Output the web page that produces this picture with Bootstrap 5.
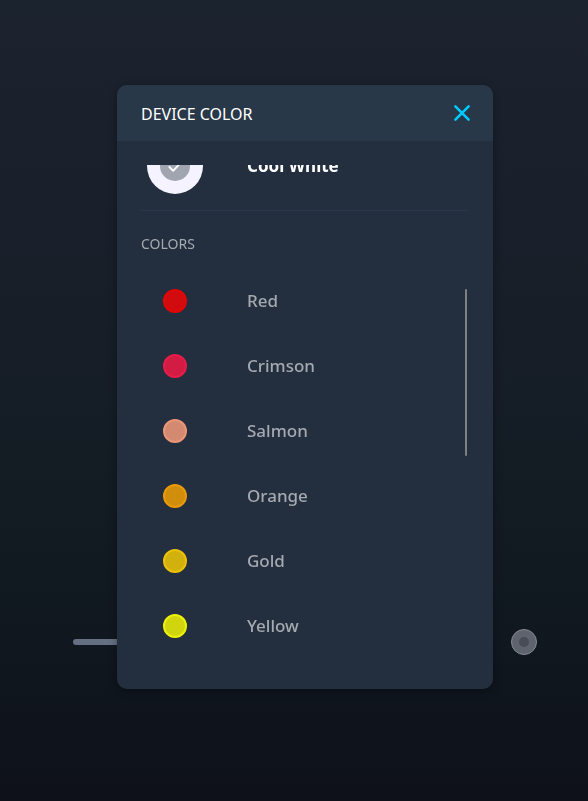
<!DOCTYPE html>
<html lang="en">
<head>
<meta charset="utf-8">
<meta name="viewport" content="width=device-width, initial-scale=1">
<title>Device color</title>
<link href="https://cdn.jsdelivr.net/npm/bootstrap@5.3.0/dist/css/bootstrap.min.css" rel="stylesheet">
<style>
  body { font-family: "Noto Sans", "Open Sans", sans-serif; color: #a5a9b0; background: linear-gradient(#1b232e, #19202b 25%, #151d26 50%, #111920 75%, #0e111a); }
  .control-bar { padding: 0 51px 146px 73px; }
  .level { appearance: none; background: #657083; height: 6px; border-radius: 3px; }
  .level::-webkit-slider-thumb { appearance: none; width: 24px; height: 24px; border-radius: 50%; background: #a5acb4; }
  .color-btn { width: 26px; height: 26px; background: #5f636d; border: 1px solid #858a93; }
  .color-btn span { width: 10px; height: 10px; background: #484c57; }
  .overlay { padding: 0 0 27px 22px; }
  .panel { width: 376px; border-radius: 10px; background: #232f3e; box-shadow: 0 2px 8px rgba(0, 0, 0, .35); }
  .panel-head { height: 56px; padding: 0 21px 0 24px; background: #283849; }
  .panel-title { padding-top: 2px; font-size: 16px; line-height: 20px; color: #fff; }
  .close-btn { width: 20px; height: 20px; }
  .scroller { height: 500px; margin: 24px; }
  .option { height: 65px; padding: 0 0 2px 6px; gap: 44px; font-size: 17px; font-weight: 500; line-height: 24px; color: #a5a9b0; }
  .option-current { margin-top: -31px; color: #fff; }
  .chip { width: 56px; height: 56px; }
  .chip-current { background: #f5f3ff; }
  .tick { width: 30px; height: 30px; background: #a1a5b0; }
  .dot { width: 24px; height: 24px; border: 2px solid var(--rim); background: var(--fill); }
  .group { margin-top: 11px; padding-top: 23px; border-top: 1px solid #283849; }
  .group-title { font-size: 14px; line-height: 20px; margin-bottom: 15px; }
  .thumb { top: 124px; right: 2px; width: 2px; height: 167px; border-radius: 1px; background: #808080; }
</style>
</head>
<body class="min-vh-100 d-flex flex-column justify-content-end overflow-hidden">
<main class="control-bar d-flex align-items-center gap-4">
  <input class="level flex-grow-1" type="range" value="50" aria-label="Brightness">
  <button type="button" class="color-btn btn rounded-circle p-0 d-flex align-items-center justify-content-center" aria-label="Choose color"><span class="rounded-circle"></span></button>
</main>
<div class="overlay position-fixed top-0 start-0 w-100 h-100 d-flex align-items-center justify-content-center">
  <section class="panel overflow-hidden" role="dialog" aria-labelledby="title">
    <header class="panel-head d-flex align-items-center justify-content-between">
      <h1 class="panel-title fw-normal mb-0" id="title">DEVICE COLOR</h1>
      <button type="button" class="close-btn btn p-0 border-0 d-flex" aria-label="Close">
        <svg width="20" height="20" viewBox="0 0 20 20" fill="none" stroke="#00caff" stroke-width="2.6" stroke-linecap="round"><path d="M3.4 3.4 16.6 16.6M16.6 3.4 3.4 16.6"/></svg>
      </button>
    </header>
    <div class="scroller position-relative overflow-hidden">
      <button type="button" class="option option-current btn w-100 border-0 d-flex align-items-center fw-bold">
        <span class="chip chip-current rounded-circle d-flex align-items-center justify-content-center"><span class="tick rounded-circle d-flex align-items-center justify-content-center"><svg width="14" height="14" viewBox="0 0 14 14" fill="none" stroke="#fff" stroke-width="1.8" stroke-linecap="round" stroke-linejoin="round"><path d="M1.4 8 5.2 11.8 12.4 4"/></svg></span></span>
        <span>Cool White</span>
      </button>
      <div class="group">
        <h2 class="group-title fw-normal">COLORS</h2>
        <ul class="list-unstyled mb-0">
          <li><button type="button" class="option btn w-100 border-0 d-flex align-items-center"><span class="chip d-flex align-items-center justify-content-center"><span class="dot rounded-circle" style="--rim:#e60505;--fill:#d20c0e"></span></span><span>Red</span></button></li>
          <li><button type="button" class="option btn w-100 border-0 d-flex align-items-center"><span class="chip d-flex align-items-center justify-content-center"><span class="dot rounded-circle" style="--rim:#e91c49;--fill:#d31c44"></span></span><span>Crimson</span></button></li>
          <li><button type="button" class="option btn w-100 border-0 d-flex align-items-center"><span class="chip d-flex align-items-center justify-content-center"><span class="dot rounded-circle" style="--rim:#ed9677;--fill:#d38a70"></span></span><span>Salmon</span></button></li>
          <li><button type="button" class="option btn w-100 border-0 d-flex align-items-center"><span class="chip d-flex align-items-center justify-content-center"><span class="dot rounded-circle" style="--rim:#eb9a07;--fill:#d18e0d"></span></span><span>Orange</span></button></li>
          <li><button type="button" class="option btn w-100 border-0 d-flex align-items-center"><span class="chip d-flex align-items-center justify-content-center"><span class="dot rounded-circle" style="--rim:#edc107;--fill:#d2b00d"></span></span><span>Gold</span></button></li>
          <li><button type="button" class="option btn w-100 border-0 d-flex align-items-center"><span class="chip d-flex align-items-center justify-content-center"><span class="dot rounded-circle" style="--rim:#edf207;--fill:#d1d50d"></span></span><span>Yellow</span></button></li>
        </ul>
      </div>
      <span class="thumb position-absolute"></span>
    </div>
  </section>
</div>
<script src="https://cdn.jsdelivr.net/npm/bootstrap@5.3.0/dist/js/bootstrap.bundle.min.js"></script>
</body>
</html>
